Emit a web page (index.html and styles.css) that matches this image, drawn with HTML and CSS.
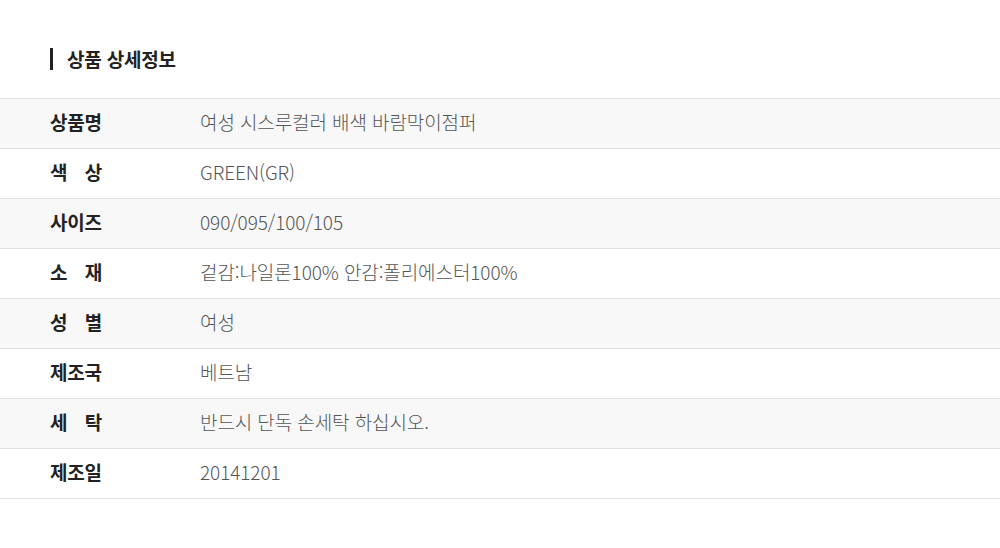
FILE: index.html
```html
<!DOCTYPE html>
<html lang="ko">
<head>
<meta charset="utf-8">
<link rel="stylesheet" href="styles.css">
</head>
<body>
<div class="page">
  <h2 class="title">상품 상세정보</h2>
  <div class="info">
    <div class="row alt"><div class="label"><span>상품명</span></div><div class="value">여성 시스루컬러 배색 바람막이점퍼</div></div>
    <div class="row"><div class="label"><span>색 상</span></div><div class="value">GREEN(GR)</div></div>
    <div class="row alt"><div class="label"><span>사이즈</span></div><div class="value">090/095/100/105</div></div>
    <div class="row"><div class="label"><span>소 재</span></div><div class="value">겉감:나일론100% 안감:폴리에스터100%</div></div>
    <div class="row alt"><div class="label"><span>성 별</span></div><div class="value">여성</div></div>
    <div class="row"><div class="label"><span>제조국</span></div><div class="value">베트남</div></div>
    <div class="row alt"><div class="label"><span>세 탁</span></div><div class="value">반드시 단독 손세탁 하십시오.</div></div>
    <div class="row"><div class="label"><span>제조일</span></div><div class="value">20141201</div></div>
  </div>
</div>
</body>
</html>
```

FILE: styles.css
```css
html, body { margin: 0; padding: 0; background: #fff; }
body { font-family: "Noto Sans CJK KR", "Noto Sans", sans-serif; }
.page { padding-top: 48px; }
.title {
  margin: 0 0 28px 50px;
  padding-left: 14px;
  border-left: 3px solid #222;
  font-size: 19px;
  line-height: 20px;
  height: 22px;
  display: flex;
  align-items: center;
  font-weight: 700;
  color: #222;
  letter-spacing: -0.2px;
}
.info { border-top: 1px solid #e2e2e2; }
.row {
  display: flex;
  align-items: center;
  box-sizing: border-box;
  height: 50px;
  padding-bottom: 4px;
  border-bottom: 1px solid #e2e2e2;
}
.row.alt { background: #f8f8f8; }
.label { width: 200px; padding-left: 50px; box-sizing: border-box; }
.label span {
  display: inline-block;
  width: 52px;
  text-align: justify;
  text-align-last: justify;
  font-size: 19px;
  font-weight: 700;
  color: #222;
  letter-spacing: -0.2px;
}
.value {
  font-size: 19px;
  color: #555;
  font-weight: 300;
  letter-spacing: -0.1px;
}
```
